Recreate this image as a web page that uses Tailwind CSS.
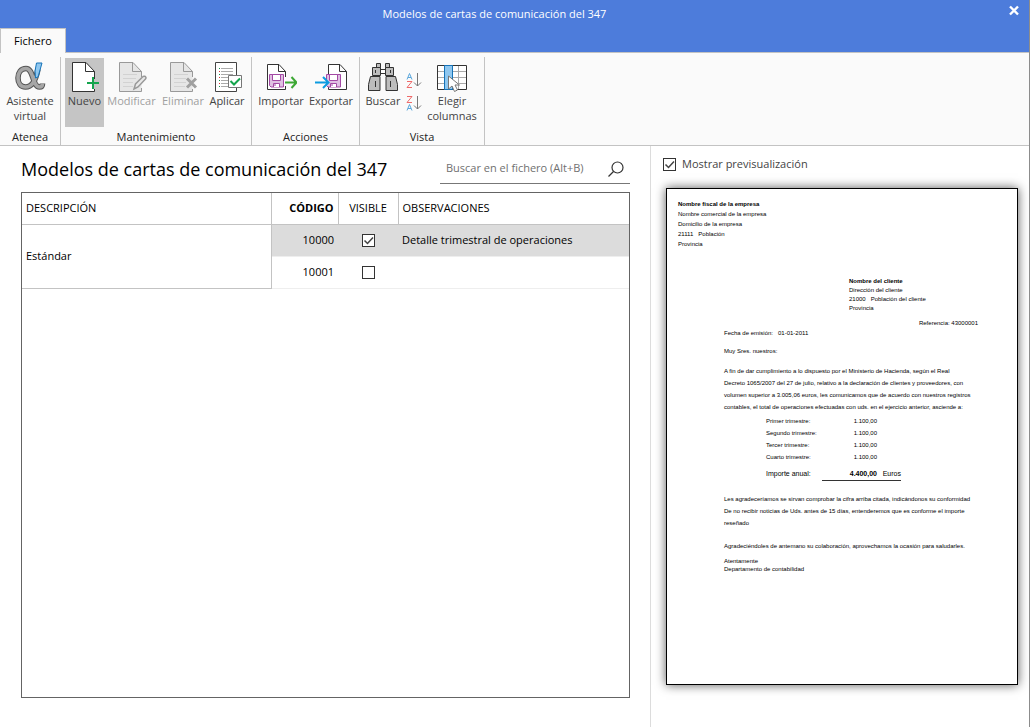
<!DOCTYPE html>
<html lang="es">
<head>
<meta charset="utf-8">
<title>Modelos de cartas de comunicación del 347</title>
<script src="https://cdn.jsdelivr.net/npm/@tailwindcss/browser@4"></script>
</head>
<body class="flex h-screen flex-col overflow-hidden border-r border-[#8c8c8c] bg-white font-['Open_Sans','Noto_Sans',sans-serif] text-[11px] text-black">

<header class="grid h-[52px] shrink-0 grid-cols-[1fr_auto_1fr] grid-rows-[28px_24px] bg-[#4d7cdb]">
  <h1 class="col-start-2 mr-10 self-center text-[11px] text-white">Modelos de cartas de comunicación del 347</h1>
  <button aria-label="Cerrar" class="mr-[5px] self-start justify-self-end p-1">
    <svg class="block size-3 text-white" viewBox="0 0 12 12" fill="none" stroke="currentColor" stroke-width="2.4"><path d="M2 2.500l8 8M10 2.500l-8 8"/></svg>
  </button>
  <nav class="z-10 col-span-3 row-start-2 flex">
    <button class="h-[25px] w-[66px] border border-b-0 border-[#c3c3c3] bg-[#fafafa] text-[11px]">Fichero</button>
  </nav>
</header>

<section class="flex h-[94px] shrink-0 border-y border-[#c3c3c3] bg-[#fafafa] pt-1 text-[#444]" aria-label="Cinta de opciones">
  <div class="flex w-[61px] flex-col border-r border-[#c3c3c3]">
    <div class="flex h-[72px] justify-center pt-px">
      <button class="flex h-[69px] w-14 flex-col items-center pt-1 text-[11px] leading-[15px]">
        <svg class="-mb-px block size-8 shrink-0" viewBox="0 0 32 32" fill="none">
          <path d="M24 7C22 18 18 25 11.500 25C6.500 25 4 21 4 16C4 10.500 7 6.500 12 6.500C20 6.500 18 25 25.500 25C27.500 25 28.500 24 28.500 21.500" stroke="#555" stroke-width="5.600"/>
          <path d="M24 7C22 18 18 25 11.500 25C6.500 25 4 21 4 16C4 10.500 7 6.500 12 6.500C20 6.500 18 25 25.500 25C27.500 25 28.500 24 28.500 21.500" stroke="#a6a6a6" stroke-width="3.600"/>
          <path d="M22.500 1h5.500l-4 14-2.500 1-.5-7z" fill="#8fc7ef" stroke="#1673b8"/>
        </svg>
        <span>Asistente<br>virtual</span>
      </button>
    </div>
    <div class="text-center text-[11px] leading-4 text-[#222]">Atenea</div>
  </div>

  <div class="flex w-[191px] flex-col border-r border-[#c3c3c3]">
    <div class="flex h-[72px] px-1 pt-px">
      <button class="flex h-[69px] w-[39px] flex-col items-center bg-[#c5c5c5] pt-1 text-[11px] leading-[15px]">
        <svg class="-mb-px block h-8 w-[31px] shrink-0" viewBox="0 0 31 32" fill="none">
          <path d="M25 17V9l-8-8H4v29h21v-5" fill="#fff"/>
          <path d="M25.500 17V9.500L17 .5H3.500v29h22V27M16.500 .5v9h9" stroke="#333"/>
          <path d="M24 15v12M18 21h12" stroke="#14a44d" stroke-width="2"/>
        </svg>
        <span>Nuevo</span>
      </button>
      <button disabled class="flex h-[69px] w-[55px] flex-col items-center pt-1 text-[11px] leading-[15px] text-[#a0a0a0]">
        <svg class="-mb-px block h-8 w-[31px] shrink-0" viewBox="0 0 31 32" fill="none">
          <path d="M25.500 15V9.500L17 .5H3.500v29h22V26M16.500 .5v9h9" fill="#e6e6e6" stroke="#999"/>
          <path d="M7 12.500h14M7 16.500h13M7 20.500h10M7 24.500h10" stroke="#d2d2d2"/>
          <path d="M18 27l1.500-5L27 14.500q2-1 3 1 0 1-.5 1.500L22 25z" fill="#e8e8e8" stroke="#999" stroke-width="1.500"/>
        </svg>
        <span>Modificar</span>
      </button>
      <button disabled class="flex h-[69px] w-12 flex-col items-center pt-1 text-[11px] leading-[15px] text-[#a0a0a0]">
        <svg class="-mb-px block size-8 shrink-0" viewBox="0 0 32 32" fill="none">
          <path d="M25.500 15V9.500L17 .5H3.500v29h22V27M16.500 .5v9h9" fill="#e6e6e6" stroke="#999"/>
          <path d="M7 12.500h14M7 16.500h12M7 20.500h12M7 24.500h11" stroke="#d2d2d2"/>
          <path d="M20 16.500l9 9M29 16.500l-9 9" stroke="#a0a0a0" stroke-width="3"/>
        </svg>
        <span>Eliminar</span>
      </button>
      <button class="flex h-[69px] w-10 flex-col items-center pt-1 text-[11px] leading-[15px]">
        <svg class="-mb-px block size-8 shrink-0" viewBox="0 0 32 32" fill="none">
          <path d="M4.500 .5h21v29h-21z" fill="#fff" stroke="#444"/>
          <path d="M10 6.500h12M10 9.500h12M10 12.500h12M10 15.500h8M10 18.500h8M10 21.500h8M10 24.500h8" stroke="#aaa"/>
          <path d="M8.500 6v1m0 5v1m0 5v1m0 5v1" stroke="#13924a"/>
          <path d="M8.500 9v1m0 5v1m0 5v1" stroke="#d33"/>
          <path d="M17.500 13.500h13v12h-13z" fill="#fff" stroke="#777"/>
          <path d="M19.500 19l3.500 3.500 6-6" stroke="#14a44d" stroke-width="2"/>
        </svg>
        <span>Aplicar</span>
      </button>
    </div>
    <div class="text-center text-[11px] leading-4 text-[#222]">Mantenimiento</div>
  </div>

  <div class="flex w-[108px] flex-col border-r border-[#c3c3c3]">
    <div class="flex h-[72px] pt-px pl-1">
      <button class="flex h-[69px] w-[50px] flex-col items-center pt-1 text-[11px] leading-[15px]">
        <svg class="-mb-px block size-8 shrink-0" viewBox="0 0 32 32" fill="none">
          <path d="M20.500 15V9.500L14 2.500H2.500v25h18V24M13.500 2.500v7h7" fill="#fff" stroke="#333"/>
          <path d="M4.500 12.500h14v12.500h-12.500l-1.500-1.500z" fill="#dfc0e2" stroke="#a349a4"/>
          <path d="M7.500 12.500h8v6h-8z" fill="#fff" stroke="#a349a4"/>
          <path d="M8.500 25v-3.500h6V25" fill="#fff" stroke="#a349a4"/>
          <path d="M10 22v2" stroke="#a349a4"/>
          <path d="M20 20.500h12M26.500 15l5 5.500-5 5.500" stroke="#3da835" stroke-width="2"/>
        </svg>
        <span>Importar</span>
      </button>
      <button class="flex h-[69px] w-[50px] flex-col items-center pt-1 text-[11px] leading-[15px]">
        <svg class="-mb-px block size-8 shrink-0" viewBox="0 0 32 32" fill="none">
          <path d="M13.500 15V2.500H25l6.500 7v18h-18V25M24.500 2.500v7h7" fill="#fff" stroke="#333"/>
          <path d="M11.500 12.500h14v12.500h-12.500l-1.500-1.500z" fill="#dfc0e2" stroke="#a349a4"/>
          <path d="M14.500 12.500h8v6h-8z" fill="#fff" stroke="#a349a4"/>
          <path d="M15.500 25v-3.500h6V25" fill="#fff" stroke="#a349a4"/>
          <path d="M17 22v2" stroke="#a349a4"/>
          <path d="M0 20.500h13M8 15l5.500 5.500L8 26" stroke="#0c9be0" stroke-width="2"/>
        </svg>
        <span>Exportar</span>
      </button>
    </div>
    <div class="text-center text-[11px] leading-4 text-[#222]">Acciones</div>
  </div>

  <div class="flex w-[125px] flex-col border-r border-[#c3c3c3]">
    <div class="flex h-[72px] px-1 pt-px">
      <button class="flex h-[69px] w-[38px] flex-col items-center pt-1 text-[11px] leading-[15px]">
        <svg class="-mb-px block size-8 shrink-0" viewBox="0 0 32 32" fill="#bdbdbd" stroke="#333">
          <path d="M9.500 1.500h4v4h-4zM18.500 1.500h4v4h-4z"/>
          <path d="M12.500 7.500h6v4h-6z" fill="#fff"/>
          <path d="M5.500 5.500h8v8h-8zM18.500 5.500h8v8h-8z"/>
          <path d="M3.500 14.500h9.500v14H1.500v-6zM19 14.500h9.500l2 8v6H19z"/>
          <path d="M8.500 19v6M23.500 19v6M8.500 8v3M23.500 8v3" fill="none"/>
        </svg>
        <span>Buscar</span>
      </button>
      <div class="flex w-6 flex-col items-center gap-[7px] pt-[15px]">
        <button aria-label="Orden ascendente"><svg class="block h-4 w-4" viewBox="0 0 16 16" fill="none">
          <path d="M1 6.500l2.500-6L6 6.500M2 4.500h3" stroke="#5ba7dc"/>
          <path d="M1 8.500h5l-5 6h5" stroke="#ee6a6a"/>
          <path d="M11.500 0v13M8 9.500l3.500 3.500L15 9.500" stroke="#777"/></svg></button>
        <button aria-label="Orden descendente"><svg class="block h-4 w-4" viewBox="0 0 16 16" fill="none">
          <path d="M1 .5h5l-5 6h5" stroke="#ee6a6a"/>
          <path d="M1 14.500l2.500-6L6 14.500M2 12.500h3" stroke="#5ba7dc"/>
          <path d="M11.500 0v13M8 9.500l3.500 3.500L15 9.500" stroke="#777"/></svg></button>
      </div>
      <button class="flex h-[69px] w-[52px] flex-col items-center pt-1 text-[11px] leading-[15px]">
        <svg class="-mb-px block size-8 shrink-0" viewBox="0 0 32 32" fill="none">
          <path d="M1.500 3.500h29v24h-29z" fill="#fff"/>
          <path d="M8.500 9v18M22.500 4v23M2 9.500h28M2 15.500h28M2 21.500h28" stroke="#aaa"/>
          <path d="M1.500 3.500h29v24h-29z" stroke="#333"/>
          <path d="M8.500 3.500h8v24h-8z" fill="#8fc7ef" stroke="#1673b8"/>
          <path d="M12.500 14v13l3.500-3 2.500 5.500 3-1.500-2.500-5h4.500z" fill="#fff" stroke="#777"/>
        </svg>
        <span>Elegir<br>columnas</span>
      </button>
    </div>
    <div class="text-center text-[11px] leading-4 text-[#222]">Vista</div>
  </div>
</section>

<main class="flex min-h-0 flex-1">
  <section class="flex min-w-0 flex-1 flex-col pt-2 pr-5 pb-[29px] pl-[21px]">
    <div class="mb-2 flex h-[30px] items-start justify-between">
      <h2 class="text-[18px] leading-[30px] whitespace-nowrap">Modelos de cartas de comunicación del 347</h2>
      <form class="flex h-[30px] w-[190px] items-center border-b border-[#777] pr-1.5 pl-1.5">
        <input aria-label="Buscar en el fichero" placeholder="Buscar en el fichero (Alt+B)" class="min-w-0 flex-1 text-[11px] outline-none placeholder:text-[#707070]">
        <button type="button" aria-label="Buscar"><svg class="block size-4" viewBox="0 0 16 16" fill="none" stroke="#333" stroke-width="1.200"><circle cx="9.500" cy="6.500" r="5.500"/><path d="M5.500 10.500L.5 15.500"/></svg></button>
      </form>
    </div>
    <div class="min-h-0 flex-1 border border-[#646464]">
      <table class="w-full table-fixed border-collapse text-[11px]">
        <colgroup><col><col class="w-[67px]"><col class="w-[60px]"><col class="w-[231px]"></colgroup>
        <thead>
          <tr class="h-[31px] border-b border-[#c3c3c3]">
            <th class="border-r border-[#c3c3c3] px-1 text-left font-normal">DESCRIPCIÓN</th>
            <th class="border-r border-[#c3c3c3] px-1 text-right font-bold">CÓDIGO</th>
            <th class="border-r border-[#c3c3c3] px-1 text-center font-normal">VISIBLE</th>
            <th class="px-1 text-left font-normal">OBSERVACIONES</th>
          </tr>
        </thead>
        <tbody>
          <tr class="h-8 border-b border-[#eee] bg-[#dcdcdc]">
            <td rowspan="2" class="border-r border-b border-[#c3c3c3] bg-white px-1">Estándar</td>
            <td class="px-1 text-right">10000</td>
            <td><label class="grid place-items-center" aria-label="Visible 10000"><input type="checkbox" checked class="peer size-[13px] appearance-none border border-[#333] bg-white [grid-area:1/1]"><svg class="pointer-events-none invisible size-[13px] peer-checked:visible [grid-area:1/1]" viewBox="0 0 13 13" fill="none" stroke="#444" stroke-width="1.500"><path d="M2.500 6.500l3 3 5.500-6"/></svg></label></td>
            <td class="px-1">Detalle trimestral de operaciones</td>
          </tr>
          <tr class="h-8 border-b border-[#eee]">
            <td class="px-1 text-right">10001</td>
            <td><label class="grid place-items-center" aria-label="Visible 10001"><input type="checkbox" class="peer size-[13px] appearance-none border border-[#333] bg-white [grid-area:1/1]"><svg class="pointer-events-none invisible size-[13px] peer-checked:visible [grid-area:1/1]" viewBox="0 0 13 13" fill="none" stroke="#444" stroke-width="1.500"><path d="M2.500 6.500l3 3 5.500-6"/></svg></label></td>
            <td></td>
          </tr>
        </tbody>
      </table>
    </div>
  </section>

  <aside class="flex w-[379px] shrink-0 flex-col border-l border-[#dcdcdc] pt-2 pr-[11px] pb-[42px] pl-[15px]">
    <label class="-ml-[3px] mb-[14px] flex h-5 items-center gap-1.5 text-[11px] text-[#444]">
      <span class="grid"><input type="checkbox" checked class="peer size-[13px] appearance-none border border-[#333] bg-white [grid-area:1/1]"><svg class="pointer-events-none invisible size-[13px] peer-checked:visible [grid-area:1/1]" viewBox="0 0 13 13" fill="none" stroke="#444" stroke-width="1.500"><path d="M2.500 6.500l3 3 5.500-6"/></svg></span>
      Mostrar previsualización
    </label>
    <article class="flex-1 border border-black bg-white pt-[10px] pl-[11px] font-['Liberation_Sans',sans-serif] text-[6px] leading-[10px] whitespace-nowrap shadow-[0_0_10px_rgba(0,0,0,0.65)]">
      <p class="font-bold">Nombre fiscal de la empresa</p>
      <p>Nombre comercial de la empresa</p>
      <p>Domicilio de la empresa</p>
      <p>21111&nbsp;&nbsp; Población</p>
      <p>Provincia</p>
      <div class="mt-7 ml-[171px] leading-[9px]">
        <p class="font-bold">Nombre del cliente</p>
        <p>Dirección del cliente</p>
        <p>21000&nbsp;&nbsp; Población del cliente</p>
        <p>Provincia</p>
      </div>
      <p class="mt-[5px] mr-[39px] text-right">Referencia: 43000001</p>
      <div class="ml-[46px]">
        <p>Fecha de emisión:&nbsp;&nbsp; 01-01-2011</p>
        <p class="mt-2">Muy Sres. nuestros:</p>
        <p class="mt-[9px] leading-3">A fin de dar cumplimiento a lo dispuesto por el Ministerio de Hacienda, según el Real<br>Decreto 1065/2007 del 27 de julio, relativo a la declaración de clientes y proveedores, con<br>volumen superior a 3.005,06 euros, les comunicamos que de acuerdo con nuestros registros<br>contables, el total de operaciones efectuadas con uds. en el ejercicio anterior, asciende a:</p>
        <dl class="mt-[2px] ml-[42px] grid w-[135px] grid-cols-[56px_55px_24px] leading-3">
          <dt>Primer trimestre:</dt><dd class="text-right">1.100,00</dd><dd></dd>
          <dt>Segundo trimestre:</dt><dd class="text-right">1.100,00</dd><dd></dd>
          <dt>Tercer trimestre:</dt><dd class="text-right">1.100,00</dd><dd></dd>
          <dt>Cuarto trimestre:</dt><dd class="text-right">1.100,00</dd><dd></dd>
          <dt class="mt-1 text-[7px] leading-[13px]">Importe anual:</dt><dd class="mt-1 border-b border-[#333] text-right text-[7px] leading-[13px] font-bold">4.400,00</dd><dd class="mt-1 border-b border-[#333] text-right text-[7px] leading-[13px]">Euros</dd>
        </dl>
        <p class="mt-3 leading-3">Les agradeceríamos se sirvan comprobar la cifra arriba citada, indicándonos su conformidad<br>De no recibir noticias de Uds. antes de 15 días, entenderemos que es conforme el importe<br>reseñado</p>
        <p class="mt-[11px] leading-3">Agradeciéndoles de antemano su colaboración, aprovechamos la ocasión para saludarles.</p>
        <p class="mt-[5px] leading-2">Atentamente<br>Departamento de contabilidad</p>
      </div>
    </article>
  </aside>
</main>
</body>
</html>
